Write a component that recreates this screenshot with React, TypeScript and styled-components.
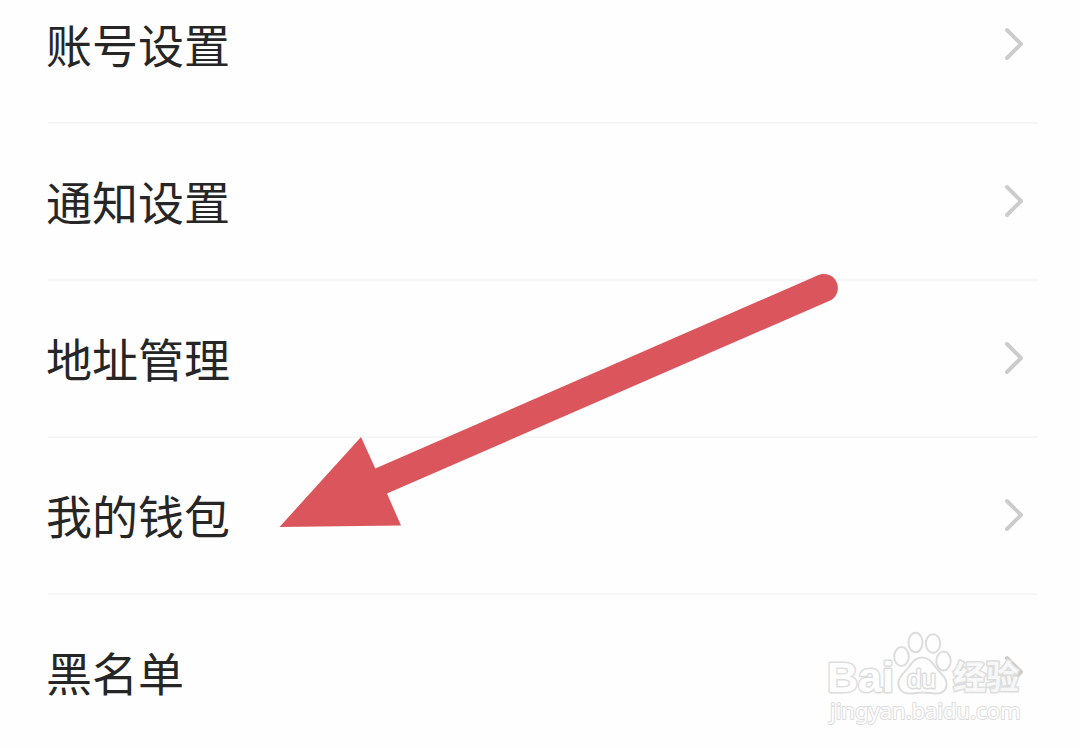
import React from "react";
import styled, { createGlobalStyle } from "styled-components";

const GlobalStyle = createGlobalStyle`
  * { box-sizing: border-box; }
  body {
    margin: 0;
    background: #fefefe;
    color: #262626;
    font-family: "Noto Sans CJK SC", "Noto Sans", sans-serif;
  }
`;

const Page = styled.main`
  position: relative;
  height: 100vh;
  overflow: hidden;
`;

const List = styled.ul`
  list-style: none;
  margin: -33px 42px 0 48px;
  padding: 0;
`;

const Item = styled.li`
  border-bottom: 2px solid #f6f6f6;
`;

const RowLink = styled.a`
  display: flex;
  align-items: center;
  justify-content: space-between;
  height: 155px;
  padding: 0 14px 2px 0;
  color: inherit;
  text-decoration: none;
`;

const Label = styled.span`
  margin: 0 0 2px -2px;
  font-size: 46px;
  line-height: 68px;
`;

const Chevron = styled.svg`
  flex: none;
  width: 20px;
  height: 36px;
  fill: none;
  stroke: #cccccc;
  stroke-width: 4;
  stroke-linecap: round;
  stroke-linejoin: round;
`;

const Arrow = styled.svg`
  position: absolute;
  left: 279px;
  top: 273px;
  width: 560px;
  height: 255px;
  pointer-events: none;
`;

const Watermark = styled.svg`
  position: absolute;
  right: 50px;
  top: 628px;
  width: 206px;
  height: 104px;
  pointer-events: none;
  fill: #fefefe;
  stroke: #dddddd;
  stroke-width: 2;
  stroke-linejoin: round;
`;

const BrandText = styled.text`
  font-family: "Liberation Sans", sans-serif;
  font-weight: 700;
  font-size: 43px;
  stroke-width: 3;
  paint-order: stroke;
`;

const PawText = styled.text`
  font-family: "Liberation Sans", sans-serif;
  font-size: 26px;
  stroke-width: 3;
  paint-order: stroke;
`;

const ChineseText = styled.text`
  font-family: "Noto Sans CJK SC", sans-serif;
  font-weight: 700;
  font-size: 33px;
  fill-opacity: 0.8;
  stroke-width: 3;
  paint-order: stroke;
`;

const UrlText = styled.text`
  font-family: "Noto Sans", sans-serif;
  font-size: 22px;
  stroke-width: 2;
  paint-order: stroke;
`;

const items = ["账号设置", "通知设置", "地址管理", "我的钱包", "黑名单"];

export default function App() {
  return (
    <Page>
      <GlobalStyle />
      <List>
        {items.map((name) => (
          <Item key={name}>
            <RowLink href="#">
              <Label>{name}</Label>
              <Chevron viewBox="0 0 20 36" aria-hidden="true">
                <path d="M3 4 L17 18 L3 32" />
              </Chevron>
            </RowLink>
          </Item>
        ))}
      </List>
      <Arrow viewBox="279 273 560 255" aria-hidden="true">
        <path
          d="M279.5 527 L361 437 L375.3 468.5 L818 275.2 A14 14 0 0 1 829.6 300.8 L387 493.5 L401 525.5 Z"
          fill="#db565c"
        />
      </Arrow>
      <Watermark viewBox="824 628 206 104">
        <BrandText x="827" y="692">Bai</BrandText>
        <ellipse cx="901.5" cy="656.5" rx="7.3" ry="9.5" />
        <ellipse cx="915.5" cy="642.5" rx="7" ry="9.7" />
        <ellipse cx="933" cy="643.5" rx="7.2" ry="9.3" />
        <ellipse cx="943.5" cy="661" rx="7.2" ry="9.5" />
        <path d="M922 657.5 C930 657.5 933 664 937 669 C942 675 947 678 946.5 685 C946 691.5 941 694 935 693.5 C929 693 926 692.5 922 692.5 C918 692.5 915 693.5 909 693.5 C902 693.5 898 689 898.5 682 C899 676 904 673 908 668 C912 663 915 657.5 922 657.5 Z" />
        <PawText x="907" y="688">du</PawText>
        <ChineseText x="953" y="689">经验</ChineseText>
        <UrlText x="830" y="719">jingyan.baidu.com</UrlText>
      </Watermark>
    </Page>
  );
}
